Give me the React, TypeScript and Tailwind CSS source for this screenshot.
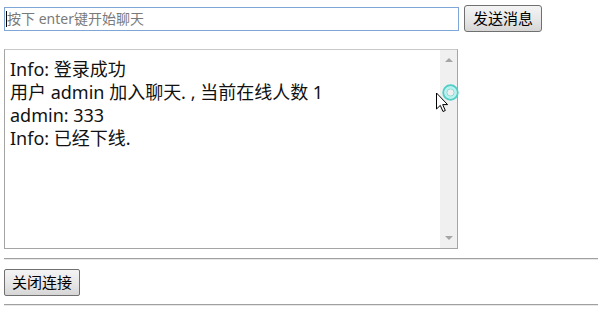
import React from "react";

export default function App() {
  return (
    <div className="relative w-[598px] h-[310px] bg-white pl-[4px] pt-[5px] text-black font-['Noto_Sans','Noto_Sans_CJK_SC',sans-serif]">
      <div className="flex items-center gap-[5px] h-[27px]">
        <div className="relative">
          <input
            className="block w-[455px] h-[24px] border border-[#7ea7d8] bg-white px-[2px] text-[14px] outline-none placeholder:text-[#7a7a7a] font-['Noto_Sans','Noto_Sans_CJK_SC',sans-serif]"
            placeholder="按下 enter键开始聊天"
            readOnly
          />
          <span className="absolute left-[2px] top-[4px] w-px h-[16px] bg-black" />
        </div>
        <button className="w-[78px] h-[27px] rounded-[3px] border border-[#707070] bg-gradient-to-b from-[#f4f4f4] via-[#e8e8e8] to-[#d6d6d6] text-[15px] leading-none text-black">
          发送消息
        </button>
      </div>

      <div className="mt-[17px] flex w-[454px] h-[200px] border border-[#a5a5a5] border-t-[#c8c8c8]">
        <div className="flex-1 pl-[5px] pt-[8px] text-[18px] leading-[23px] text-[#111]">
          <div>Info: 登录成功</div>
          <div>用户 admin 加入聊天. , 当前在线人数 1</div>
          <div>admin: 333</div>
          <div>Info: 已经下线.</div>
        </div>
        <div className="w-[17px] bg-[#f0f0f0] flex flex-col items-center justify-between py-[7px]">
          <svg width="8" height="5" viewBox="0 0 8 5">
            <path d="M0 5 L4 1 L8 5 Z" fill="#a5a5a5" />
          </svg>
          <svg width="8" height="5" viewBox="0 0 8 5">
            <path d="M0 0 L4 4 L8 0 Z" fill="#a5a5a5" />
          </svg>
        </div>
      </div>

      <div className="mt-[9px] border-t border-[#a0a0a0] border-b-[#e8e8e8] border-b h-[2px]" />

      <button className="mt-[9px] block w-[76px] h-[27px] rounded-[2px] border border-[#707070] bg-gradient-to-b from-[#f4f4f4] via-[#e8e8e8] to-[#d6d6d6] text-[15px] leading-none text-black">
        关闭连接
      </button>

      <div className="mt-[8px] border-t border-[#a0a0a0] border-b-[#e8e8e8] border-b h-[2px]" />

      <svg
        className="absolute left-[434px] top-[82px]"
        width="28"
        height="34"
        viewBox="0 0 28 34"
      >
        <circle cx="16.5" cy="10.5" r="7.2" fill="none" stroke="#4fcfc8" strokeWidth="2" />
        <circle cx="16.5" cy="10.5" r="5" fill="none" stroke="#b8f2ee" strokeWidth="2.2" />
        <circle cx="16.5" cy="10.5" r="3.6" fill="none" stroke="#6fd6d0" strokeWidth="0.8" />
        <path
          d="M2.5 11 L2.5 27 L6.3 23.4 L9 29.5 L11.3 28.5 L8.7 22.6 L13.6 22.6 Z"
          fill="#ffffff"
          stroke="#000000"
          strokeWidth="1"
          strokeLinejoin="miter"
        />
      </svg>
    </div>
  );
}
